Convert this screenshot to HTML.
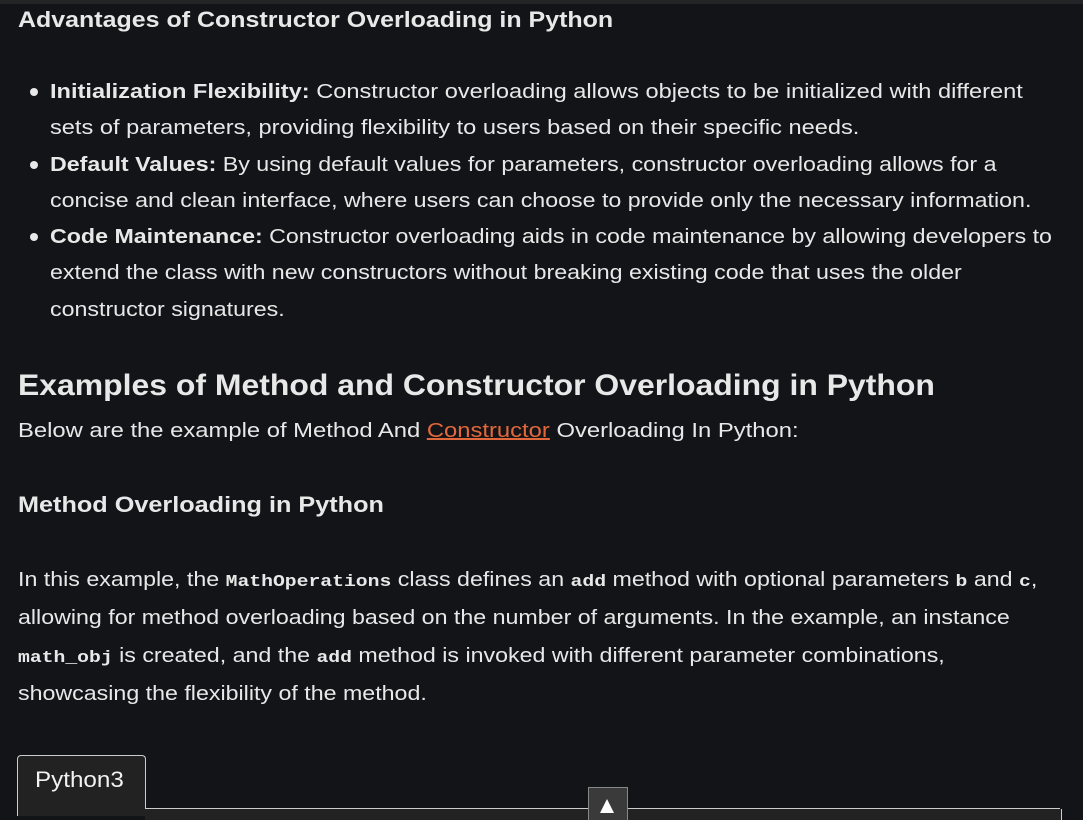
<!DOCTYPE html>
<html><head><style>
html,body{margin:0;padding:0;background:#131417;width:1083px;height:820px;overflow:hidden}
body{font-family:"Liberation Sans",sans-serif;color:#e8e8e8;position:relative}
.top{position:absolute;left:0;top:0;width:1083px;height:4px;background:#232425}
.t{position:absolute;white-space:nowrap;transform-origin:0 0}
b{font-weight:bold}
code{font-family:"Liberation Mono",monospace;font-weight:bold;font-size:17px;line-height:1}
.dot{position:absolute;width:8px;height:8px;border-radius:50%;background:#e8e8e8}
a{color:#e2683c;text-decoration:underline}
</style></head><body>
<div class="top"></div>
<div class="t" style="left:18px;top:7px;font-size:22px;font-weight:bold;transform:scaleX(1.135)">Advantages of Constructor Overloading in Python</div>

<div class="dot" style="left:30px;top:88px"></div>
<div class="t" style="left:50px;top:74px;font-size:20px;line-height:36.3px;transform:scaleX(1.18)"><b>Initialization Flexibility:</b> Constructor overloading allows objects to be initialized with different<br>sets of parameters, providing flexibility to users based on their specific needs.</div>
<div class="dot" style="left:30px;top:161px"></div>
<div class="t" style="left:50px;top:147px;font-size:20px;line-height:36.3px;transform:scaleX(1.16)"><b>Default Values:</b> By using default values for parameters, constructor overloading allows for a<br>concise and clean interface, where users can choose to provide only the necessary information.</div>
<div class="dot" style="left:30px;top:233px"></div>
<div class="t" style="left:50px;top:219px;font-size:20px;line-height:36.3px;transform:scaleX(1.16)"><b>Code Maintenance:</b> Constructor overloading aids in code maintenance by allowing developers to<br>extend the class with new constructors without breaking existing code that uses the older<br>constructor signatures.</div>

<div class="t" style="left:18px;top:369px;font-size:30px;font-weight:bold;transform:scaleX(1.064)">Examples of Method and Constructor Overloading in Python</div>
<div class="t" style="left:18px;top:420px;font-size:20px;transform:scaleX(1.19)">Below are the example of Method And <a>Constructor</a> Overloading In Python:</div>
<div class="t" style="left:18px;top:492px;font-size:22px;font-weight:bold;transform:scaleX(1.147)">Method Overloading in Python</div>
<div class="t" style="left:18px;top:561px;font-size:20px;line-height:38px;transform:scaleX(1.16)">In this example, the <code>MathOperations</code> class defines an <code>add</code> method with optional parameters <code>b</code> and <code>c</code>,<br>allowing for method overloading based on the number of arguments. In the example, an instance<br><code>math_obj</code> is created, and the <code>add</code> method is invoked with different parameter combinations,<br>showcasing the flexibility of the method.</div>

<div style="position:absolute;left:17px;top:755px;width:127px;height:60px;border:1px solid #ccc;border-bottom:none;border-radius:4px 4px 0 0;background:#222222"></div>
<div class="t" style="left:35px;top:767px;font-size:22px;color:#f2f2f2;transform:scaleX(1.1)">Python3</div>
<div style="position:absolute;left:145px;top:808px;width:915px;height:1px;background:#ccc"></div>
<div style="position:absolute;left:145px;top:809px;width:916px;height:11px;background:#222222;border-right:1px solid #ccc"></div>
<div style="position:absolute;left:588px;top:787px;width:38px;height:33px;background:#3a3a3a;border:1px solid #888;border-bottom:none"></div>
<div style="position:absolute;left:600px;top:799px;width:0;height:0;border-left:7px solid transparent;border-right:7px solid transparent;border-bottom:14px solid #fff"></div>
</body></html>
